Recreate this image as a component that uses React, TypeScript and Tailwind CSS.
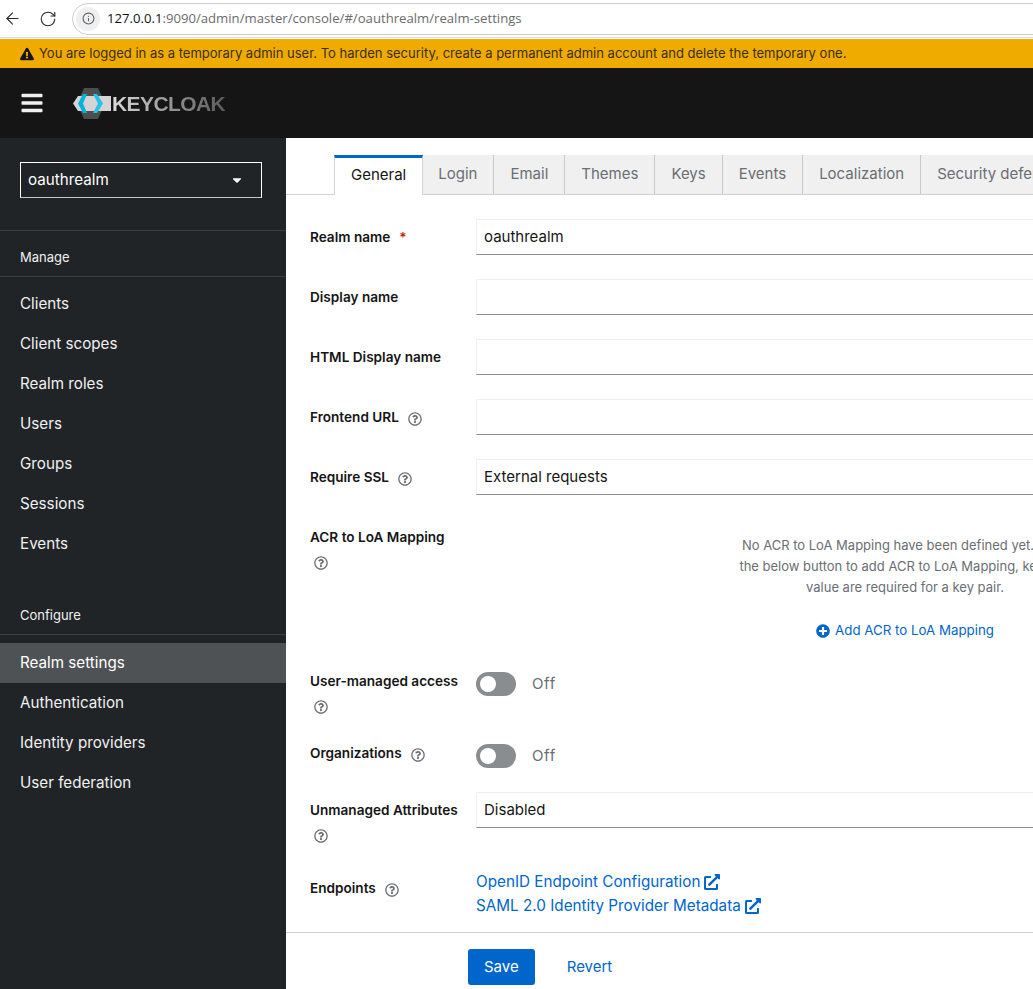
import { ReactNode } from 'react';
import { ArrowLeft, Info, RotateCw } from 'lucide-react';
import {
  FaBars,
  FaCaretDown,
  FaExclamationTriangle,
  FaExternalLinkAlt,
  FaPlusCircle,
  FaRegQuestionCircle,
} from 'react-icons/fa';

const tabs = ['General', 'Login', 'Email', 'Themes', 'Keys', 'Events', 'Localization', 'Security defenses'];
const manageItems = ['Clients', 'Client scopes', 'Realm roles', 'Users', 'Groups', 'Sessions', 'Events'];
const configureItems = ['Realm settings', 'Authentication', 'Identity providers', 'User federation'];

const Help = () => <FaRegQuestionCircle className="w-[14px] h-[14px] text-[#6a6e73] shrink-0" />;

const KeycloakLogo = () => (
  <div className="flex items-center ml-[30px]">
    <svg width="38" height="31" viewBox="0 0 38 31" className="shrink-0">
      <polygon points="11,0 25,0 32,15.5 25,31 11,31 4,15.5" fill="#4d4d4d" />
      <polygon points="0,15.5 5,8 38,8 38,23 5,23" fill="#d4d4d4" />
      <path d="M10 6 L5 15.5 L10 25 L14 25 L10 15.5 L14 6 Z" fill="#00b4e0" />
      <path d="M20 6 L24 6 L30 15.5 L24 25 L20 25 L25 15.5 Z" fill="#25c2ea" />
    </svg>
    <span className="ml-px font-['Liberation_Sans',sans-serif] font-bold text-[21px] leading-none tracking-[-0.6px] text-transparent bg-clip-text bg-gradient-to-r from-[#dcdcdc] to-[#5a5a5a]">
      KEYCLOAK
    </span>
  </div>
);

const NavItem = ({ label, active }: { label: string; active?: boolean }) => (
  <div className={`h-10 flex items-center pl-5 pt-px text-[15.2px] text-[#f0f0f0] ${active ? 'bg-[#4f5255] text-white' : ''}`}>
    {label}
  </div>
);

const NavTitle = ({ label }: { label: string }) => (
  <div className="h-[45px] flex items-end pb-[9px] pl-5 text-[13px] leading-5 text-[#f0f0f0]">{label}</div>
);

const Sidebar = () => (
  <aside className="w-[286px] shrink-0 bg-[#212427] flex flex-col">
    <div className="px-5 pt-6 pb-8 border-b border-[#3c3f42]">
      <div className="h-9 w-[242px] border border-white border-b-[#c7c7c7] flex items-center justify-between pl-[7px] pr-[17px] text-[15.2px] text-white">
        <span>oauthrealm</span>
        <FaCaretDown className="w-[14px] h-[14px]" />
      </div>
    </div>
    <div className="border-b border-[#3c3f42]">
      <NavTitle label="Manage" />
    </div>
    <nav className="flex flex-col pt-[7px]">
      {manageItems.map((item) => (
        <NavItem key={item} label={item} />
      ))}
    </nav>
    <div className="border-b border-[#3c3f42] mt-[25px]">
      <NavTitle label="Configure" />
    </div>
    <nav className="flex flex-col pt-2">
      {configureItems.map((item) => (
        <NavItem key={item} label={item} active={item === 'Realm settings'} />
      ))}
    </nav>
  </aside>
);

const Tabs = () => (
  <div className="flex pl-12 pt-[17px] border-b border-[#d2d2d2] h-[57px] shrink-0">
    {tabs.map((tab) =>
      tab === 'General' ? (
        <div key={tab} className="h-10 px-4 pb-[2px] flex items-center border-t-[3px] border-t-[#06c] border-x border-x-[#d2d2d2] bg-white text-[15px] text-[#151515] relative z-10 -mb-px -mr-px">
          {tab}
        </div>
      ) : (
        <div key={tab} className="h-[39px] px-4 flex items-center whitespace-nowrap border-r border-[#c8c8c8] bg-[#f0f0f0] text-[15px] text-[#6a6e73]">
          {tab}
        </div>
      ),
    )}
  </div>
);

const Row = ({ label, children, className }: { label: ReactNode; children?: ReactNode; className?: string }) => (
  <div className={`flex ${className ?? ''}`}>
    <div className="w-[166px] shrink-0 text-[13.6px] leading-[21px] font-semibold text-[#151515]">{label}</div>
    <div className="flex-1 min-w-0">{children}</div>
  </div>
);

const Field = ({ value }: { value?: string }) => (
  <div className="h-9 w-full border border-[#f0f0f0] border-b-[#8a8d90] flex items-center pl-[7px] text-[15px] text-[#151515]">
    {value}
  </div>
);

const Toggle = () => (
  <div className="flex items-center gap-4">
    <div className="w-10 h-6 rounded-full bg-[#8a8d90] flex items-center pl-1">
      <div className="w-4 h-4 rounded-full bg-white" />
    </div>
    <span className="text-[15px] tracking-[0.6px] text-[#6a6e73]">Off</span>
  </div>
);

const FieldLabel = ({ text, required }: { text: string; required?: boolean }) => (
  <div className="h-9 flex items-center">
    {text}
    {required && <span className="text-[#c9190b] ml-[9px]">*</span>}
  </div>
);

const HelpLabel = ({ text, offset }: { text: string; offset: string }) => (
  <div className={`flex items-center gap-[9px] ${offset}`}>
    {text}
    <span className="mt-[3px]"><Help /></span>
  </div>
);

const StackedLabel = ({ text, className }: { text: string; className?: string }) => (
  <div className={className}>
    <div>{text}</div>
    <div className="mt-[8px] ml-[4px]"><Help /></div>
  </div>
);

const ExternalLink = ({ text }: { text: string }) => (
  <div className="h-6 flex items-center gap-[4px] text-[15.25px] text-[#06c] whitespace-nowrap">
    {text}
    <FaExternalLinkAlt className="w-4 h-4" />
  </div>
);

const SettingsForm = () => (
  <div className="flex flex-col gap-6 pl-6 pt-6">
    <Row label={<FieldLabel text="Realm name" required />}><Field value="oauthrealm" /></Row>
    <Row label={<FieldLabel text="Display name" />}><Field /></Row>
    <Row label={<FieldLabel text="HTML Display name" />}><Field /></Row>
    <Row label={<HelpLabel text="Frontend URL" offset="h-9" />}><Field /></Row>
    <Row label={<HelpLabel text="Require SSL" offset="h-9" />}><Field value="External requests" /></Row>
    <Row label={<div className="pt-2"><StackedLabel text="ACR to LoA Mapping" /></div>}>
      <div className="h-[129px] pt-4 flex flex-col items-center text-center">
        <p className="text-[13px] leading-[21px] text-[#6a6e73] whitespace-nowrap">
          No ACR to LoA Mapping have been defined yet. Click<br />
          the below button to add ACR to LoA Mapping, key and<br />
          value are required for a key pair.
        </p>
        <div className="mt-[23px] flex items-center gap-[5px] text-[13.3px] text-[#06c] whitespace-nowrap">
          <FaPlusCircle className="w-[14px] h-[14px]" />
          Add ACR to LoA Mapping
        </div>
      </div>
    </Row>
    <Row label={<StackedLabel text="User-managed access" className="-mt-px" />} className="h-12"><Toggle /></Row>
    <Row label={<HelpLabel text="Organizations" offset="h-6 -mt-[3px]" />} className="h-6"><Toggle /></Row>
    <Row label={<div className="pt-2"><StackedLabel text="Unmanaged Attributes" /></div>} className="h-[54px]"><Field value="Disabled" /></Row>
    <Row label={<HelpLabel text="Endpoints" offset="h-9" />} className="h-12">
      <ExternalLink text="OpenID Endpoint Configuration" />
      <ExternalLink text="SAML 2.0 Identity Provider Metadata" />
    </Row>
  </div>
);

const Footer = () => (
  <div className="mt-[14px] border-t border-[#d2d2d2] pt-4 pl-[182px] flex items-center gap-4">
    <button className="h-9 px-4 rounded-[3px] bg-[#06c] text-white text-[15px]">Save</button>
    <button className="h-9 px-4 text-[#06c] text-[15px]">Revert</button>
  </div>
);

export default function App() {
  return (
    <div className="w-[1033px] h-[989px] overflow-hidden flex flex-col bg-white font-['Inter','Noto_Sans',sans-serif]">
      <div className="h-[38px] shrink-0 bg-white flex items-center pl-[3px] border-b border-[#d9d9d9] font-['Open_Sans',sans-serif]">
        <ArrowLeft className="w-[19px] h-[19px] text-[#2b2b2b]" strokeWidth={1.4} />
        <RotateCw className="w-[18px] h-[18px] ml-[17px] text-[#2b2b2b]" strokeWidth={1.5} />
        <div className="ml-[15px] flex-1 h-[32px] -mr-5 rounded-l-full border border-[#cfcfcf] flex items-center pl-[3px] text-[13.15px]">
          <span className="w-[24px] h-[24px] rounded-full bg-[#efefef] flex items-center justify-center">
            <Info className="w-[13px] h-[13px] text-[#5f6368]" />
          </span>
          <span className="ml-[7px] text-[#111]">127.0.0.1</span>
          <span className="text-[#6b6b6b]">:9090/admin/master/console/#/oauthrealm/realm-settings</span>
        </div>
      </div>
      <div className="h-[29px] mt-px shrink-0 bg-[#f0ab00] flex items-center pl-5 gap-[5px] text-[13.03px] text-[#3a2f0a] whitespace-nowrap">
        <FaExclamationTriangle className="w-[14px] h-[14px] text-[#151515]" />
        You are logged in as a temporary admin user. To harden security, create a permanent admin account and delete the temporary one.
      </div>
      <header className="h-[70px] shrink-0 bg-[#151515] flex items-center pl-[21px]">
        <FaBars className="w-[22px] h-[24px] text-[#f0f0f0]" />
        <KeycloakLogo />
      </header>
      <div className="flex-1 flex min-h-0">
        <Sidebar />
        <main className="flex-1 min-w-0 flex flex-col">
          <div className="w-[1048px]">
            <Tabs />
            <SettingsForm />
          </div>
          <Footer />
        </main>
      </div>
    </div>
  );
}
